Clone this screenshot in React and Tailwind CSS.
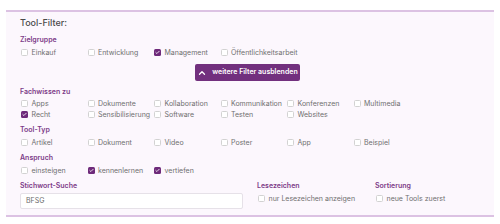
import React from 'react';
import { ChevronUp, Check } from 'lucide-react';

function Box({ checked }) {
  return checked ? (
    <span className="flex h-[7px] w-[7px] shrink-0 items-center justify-center rounded-[1.5px] bg-[#6e2a7a]">
      <Check className="h-[5px] w-[5px] text-white" strokeWidth={4} />
    </span>
  ) : (
    <span className="h-[7px] w-[7px] shrink-0 rounded-[1.5px] border-[0.8px] border-[#d2d2d2] bg-white" />
  );
}

function Option({ label, checked }) {
  return (
    <label className="flex h-[11px] items-center gap-[3.5px] whitespace-nowrap pl-[1px] text-[7px] leading-[11px] text-[#6f6f6f]">
      <Box checked={checked} />
      <span>{label}</span>
    </label>
  );
}

function Label({ children, className = '' }) {
  return <div className={`h-[10px] text-[7px] font-semibold leading-[10px] text-[#7d3b88] ${className}`}>{children}</div>;
}

function Options({ items, className = '' }) {
  return (
    <div className={`grid grid-cols-[repeat(6,66.5px)] ${className}`}>
      {items.map(([l, c]) => (
        <Option key={l} label={l} checked={c} />
      ))}
    </div>
  );
}

export default function App() {
  return (
    <div className="h-[224px] w-[500px] bg-white pt-[10px] px-[6px] font-['Inter',sans-serif]">
      <div className="border-y-2 border-[#dcc2e3] bg-[#fcf7fd] px-[14px] pt-[4px] pb-[6px]">
        <div className="h-[14px] text-[9px] font-medium leading-[14px] text-[#4a4a4a]">Tool-Filter:</div>

        <Label className="mt-[5px]">Zielgruppe</Label>
        <Options
          className="mt-[2px]"
          items={[['Einkauf'], ['Entwicklung'], ['Management', true], ['Öffentlichkeitsarbeit']]}
        />

        <div className="mt-[6px] flex justify-center pr-[5px]">
          <button className="flex h-[17px] w-[105px] items-center justify-center gap-[5px] rounded-[2px] bg-[#72307e] text-[7px] font-semibold text-white">
            <ChevronUp className="h-[10px] w-[10px]" strokeWidth={3} />
            <span>weitere Filter ausblenden</span>
          </button>
        </div>

        <Label className="mt-[6px]">Fachwissen zu</Label>
        <Options
          className="mt-[1px]"
          items={[
            ['Apps'], ['Dokumente'], ['Kollaboration'], ['Kommunikation'], ['Konferenzen'], ['Multimedia'],
            ['Recht', true], ['Sensibilisierung'], ['Software'], ['Testen'], ['Websites'],
          ]}
        />

        <Label className="mt-[5px]">Tool-Typ</Label>
        <Options
          className="mt-[2px]"
          items={[['Artikel'], ['Dokument'], ['Video'], ['Poster'], ['App'], ['Beispiel']]}
        />

        <Label className="mt-[5px]">Anspruch</Label>
        <Options className="mt-[2px]" items={[['einsteigen'], ['kennenlernen', true], ['vertiefen', true]]} />

        <div className="mt-[5px] flex">
          <div className="w-[223px]">
            <Label>Stichwort-Suche</Label>
            <div className="mt-[2px] flex h-[16px] items-center rounded-[2px] border border-[#e6e1e8] bg-white pl-[5px] text-[7px] text-[#6b6b6b]">
              BFSG
            </div>
          </div>
          <div className="ml-[14px] w-[104px]">
            <Label>Lesezeichen</Label>
            <div className="mt-[2px]">
              <Option label="nur Lesezeichen anzeigen" />
            </div>
          </div>
          <div className="ml-[14px]">
            <Label>Sortierung</Label>
            <div className="mt-[2px]">
              <Option label="neue Tools zuerst" />
            </div>
          </div>
        </div>
      </div>
    </div>
  );
}
